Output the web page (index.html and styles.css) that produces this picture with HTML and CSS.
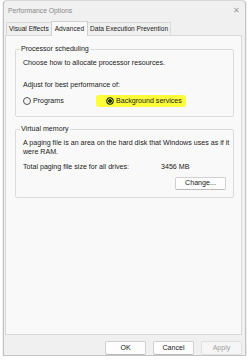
FILE: index.html
```html
<!DOCTYPE html>
<html lang="en">
<head>
  <meta charset="UTF-8">
  <title>Performance Options</title>
  <link rel="stylesheet" href="styles.css">
</head>
<body>
  <div class="window">
    <div class="titlebar">
      <span class="title">Performance Options</span>
      <span class="close">&#x2715;</span>
    </div>
    <div class="tabs">
      <div class="tab">Visual Effects</div>
      <div class="tab active">Advanced</div>
      <div class="tab">Data Execution Prevention</div>
    </div>
    <div class="panel">
      <fieldset class="group">
        <legend>Processor scheduling</legend>
        <p>Choose how to allocate processor resources.</p>
        <p class="gap">Adjust for best performance of:</p>
        <div class="radios">
          <label class="radio"><span class="dot"></span>Programs</label>
          <label class="radio marked"><span class="dot on"></span>Background services</label>
        </div>
      </fieldset>
      <fieldset class="group memory">
        <legend>Virtual memory</legend>
        <p>A paging file is an area on the hard disk that Windows uses as if it were RAM.</p>
        <div class="size-row">
          <span>Total paging file size for all drives:</span>
          <span class="size">3456 MB</span>
        </div>
        <div class="change-row">
          <button class="btn change">Change...</button>
        </div>
      </fieldset>
    </div>
    <div class="footer">
      <button class="btn">OK</button>
      <button class="btn">Cancel</button>
      <button class="btn disabled">Apply</button>
    </div>
  </div>
</body>
</html>
```

FILE: styles.css
```css
body { margin: 0; background: #fff; font-family: "Liberation Sans", Arial, sans-serif; font-size: 7.1px; color: #1a1a1a; }
.window { margin-left: 3px; width: 243px; height: 356px; box-sizing: border-box; border: 1px solid #c4c4c4; border-top-color: #d8d8d8; border-radius: 4px 4px 0 0; background: #f0f0f0; display: flex; flex-direction: column; box-shadow: 0 1px 1px #555; }
.titlebar { height: 20px; display: flex; align-items: center; justify-content: space-between; padding: 0 5px 0 4px; color: #8a8a8a; font-size: 6.8px; }
.close { font-size: 8px; color: #9a9a9a; }
.tabs { display: flex; padding-left: 2px; height: 14px; align-items: flex-end; font-size: 6.6px; }
.tab { height: 13px; box-sizing: border-box; padding: 0 2px; border: 1px solid #d9d9d9; border-bottom: none; background: #f0f0f0; display: flex; align-items: center; margin-right: -1px; }
.tab.active { height: 15px; background: #f9f9f9; position: relative; z-index: 1; margin-bottom: -1px; padding: 0 3px; border-color: #d0d0d0; }
.panel { margin: 0 3px 0 1px; height: 301px; box-sizing: border-box; background: #f9f9f9; border: 1px solid #d9d9d9; padding: 9px 7px 0 9px; display: flex; flex-direction: column; gap: 8px; }
.group { margin: 0; border: 1px solid #dcdcdc; border-radius: 2px; padding: 5px 3px 9px 7px; min-width: 0; }
.group legend { padding: 0 1px; margin-left: -3px; line-height: 9px; }
.group p { margin: 0; line-height: 9px; }
.group p.gap { margin-top: 13px; }
.radios { display: flex; margin-top: 5px; }
.radio { display: flex; align-items: center; gap: 2px; line-height: 10px; }
.radio:first-child { width: 83px; }
.marked { background: #fdfd3a; border-radius: 3px; padding: 1px 4px 1px 10px; margin-left: -10px; }
.dot { width: 6px; height: 6px; border: 1px solid #555; border-radius: 50%; background: #f4f4f4; }
.dot.on { background: radial-gradient(circle, #1f2a00 0 1.5px, #c8d400 2px 2.5px, #2e4000 3px); border-color: #2e4000; }
.memory { padding-bottom: 7px; }
.size-row { display: flex; margin-top: 5px; line-height: 10px; }
.size-row span:first-child { width: 138px; }
.change-row { display: flex; justify-content: flex-end; margin-top: 5px; padding-right: 5px; }
.btn { font-family: inherit; font-size: 7.1px; color: #1a1a1a; background: #fdfdfd; border: 1px solid #d0d0d0; border-bottom-color: #bbb; border-radius: 2px; height: 14px; width: 41px; padding: 0; }
.change { width: 51px; height: 13px; margin-right: -1px; }
.footer { display: flex; justify-content: flex-end; gap: 7px; padding: 6px 3px 0 0; }
.btn.disabled { color: #a0a0a0; background: #f6f6f6; border-color: #e0e0e0; }
```
